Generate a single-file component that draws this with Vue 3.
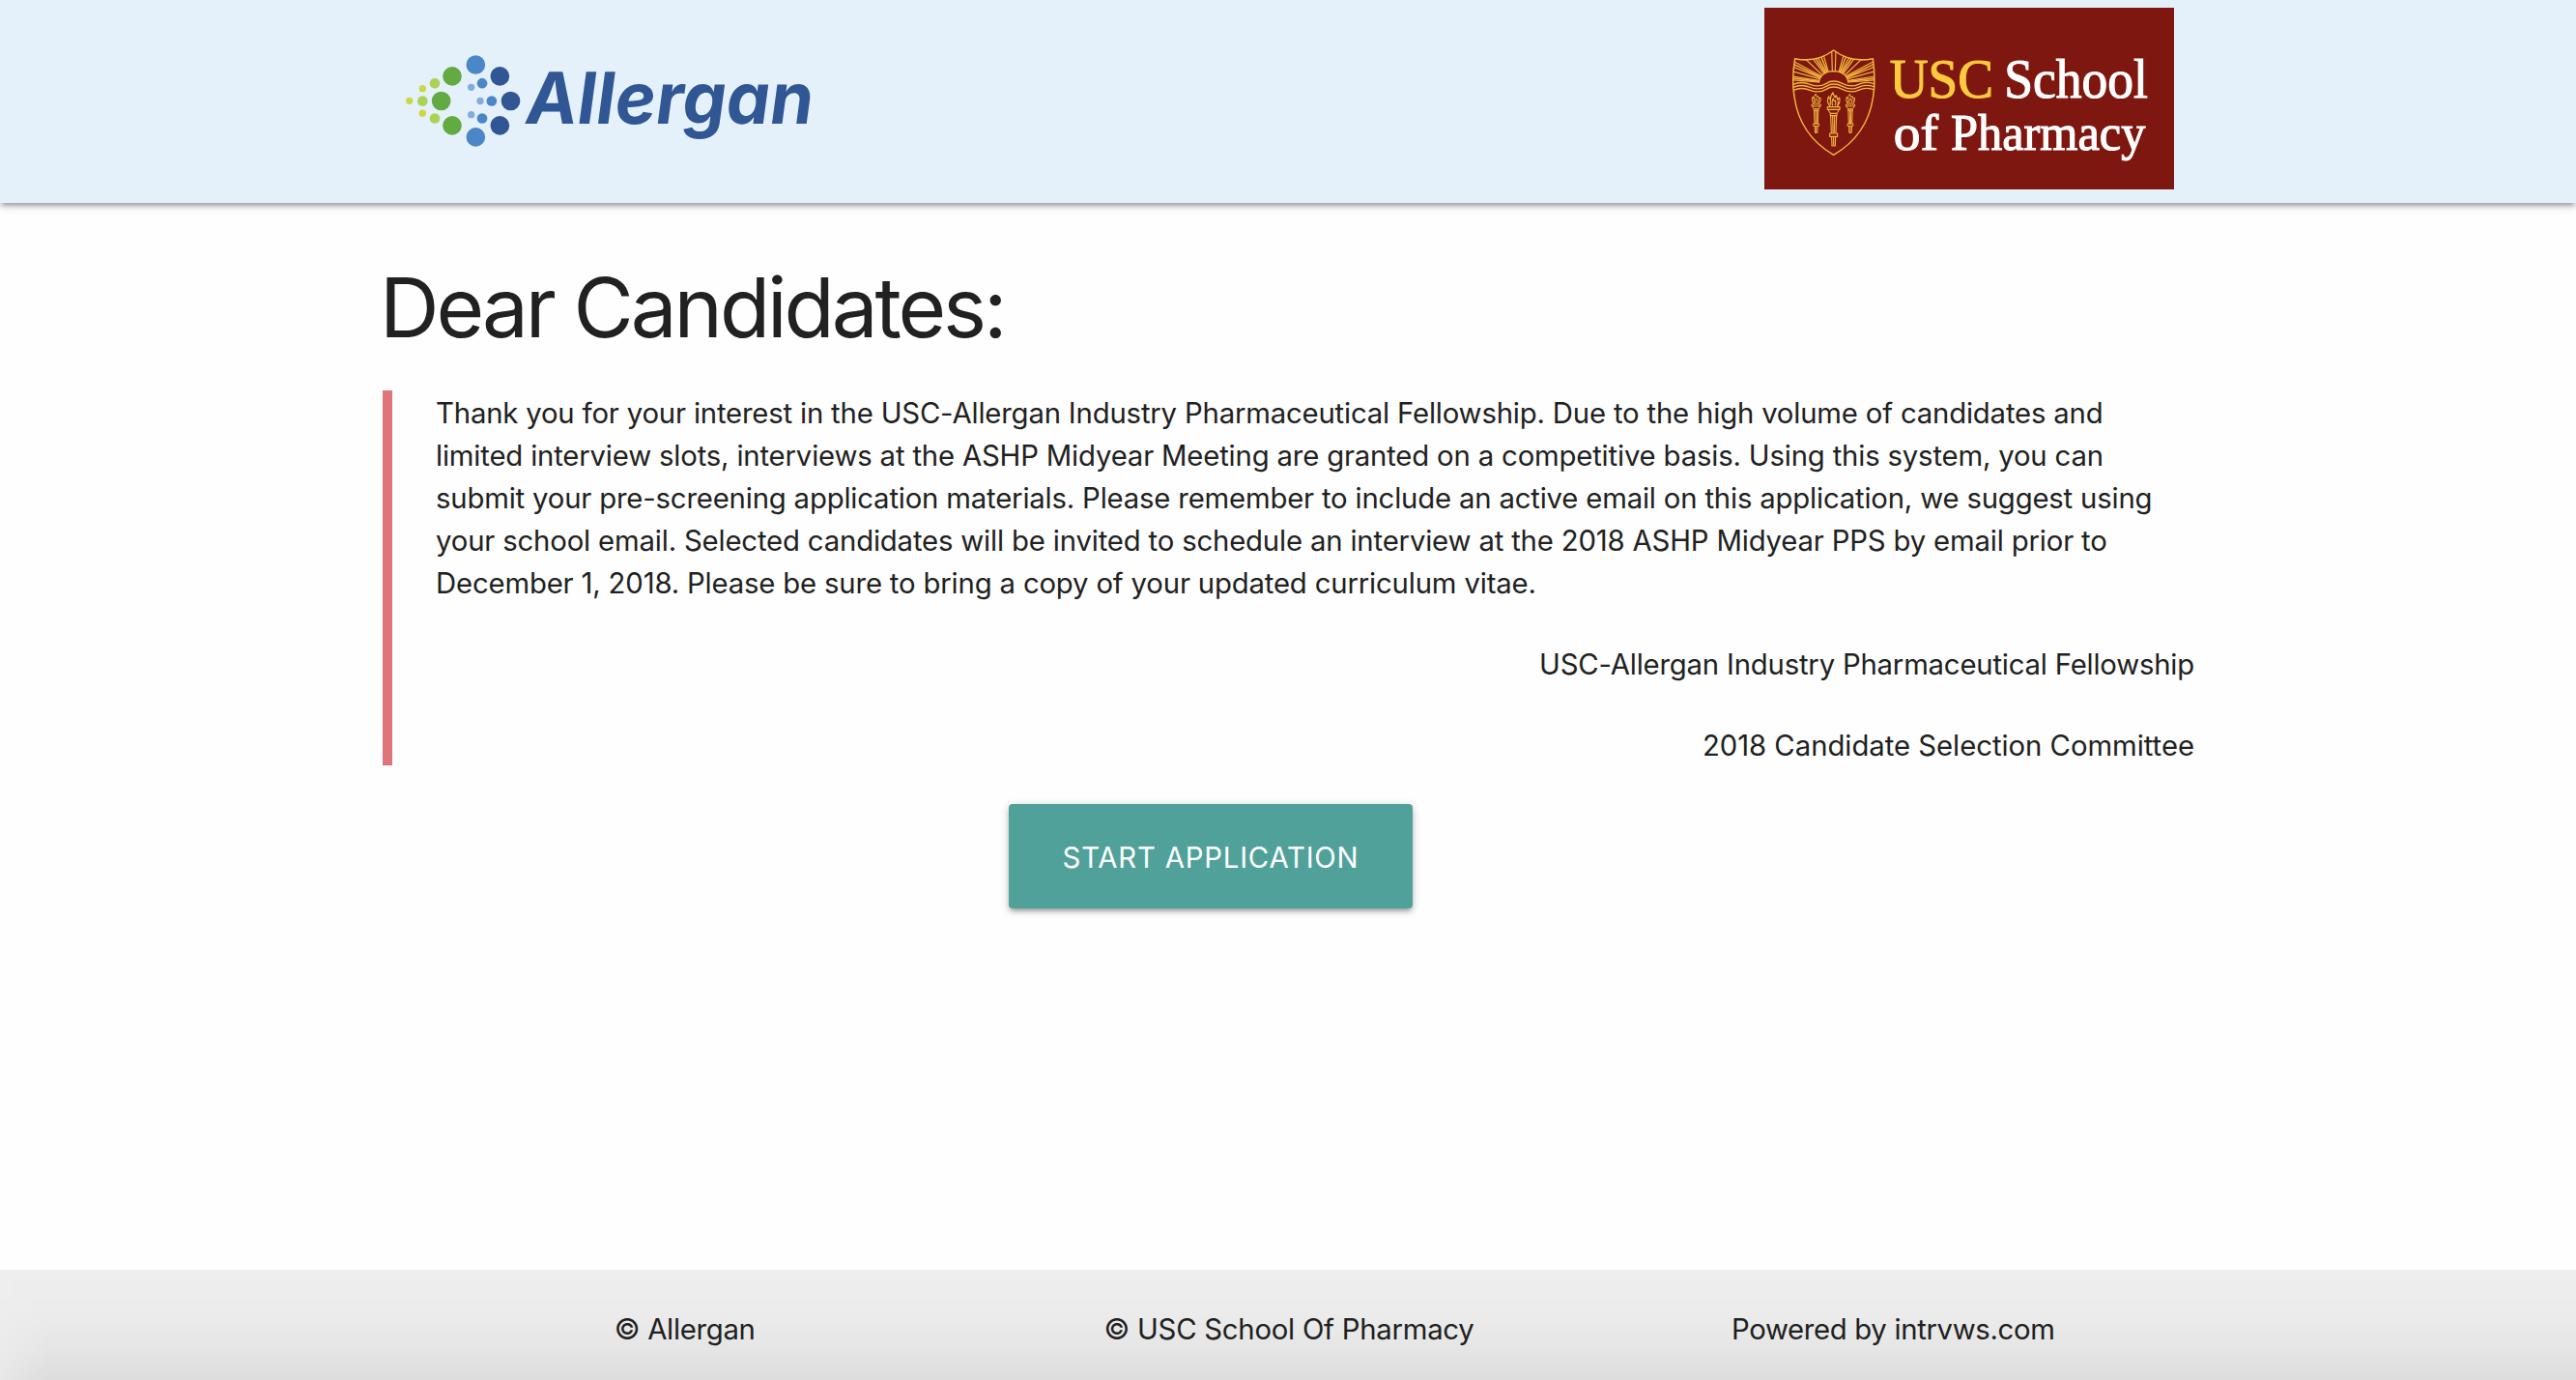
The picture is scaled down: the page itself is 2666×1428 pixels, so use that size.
<script setup>
const letter = [
  { text: 'Thank you for your interest in the USC-Allergan Industry Pharmaceutical Fellowship. Due to the high volume of candidates and', track: -0.175 },
  { text: 'limited interview slots, interviews at the ASHP Midyear Meeting are granted on a competitive basis. Using this system, you can', track: -0.17 },
  { text: 'submit your pre-screening application materials. Please remember to include an active email on this application, we suggest using', track: -0.177 },
  { text: 'your school email. Selected candidates will be invited to schedule an interview at the 2018 ASHP Midyear PPS by email prior to', track: -0.165 },
  { text: 'December 1, 2018. Please be sure to bring a copy of your updated curriculum vitae.', track: -0.165 },
]
const signature = [
  { text: 'USC-Allergan Industry Pharmaceutical Fellowship', track: -0.196 },
  { text: '2018 Candidate Selection Committee', track: -0.03 },
]
const credits = [
  { text: '© Allergan', track: -0.28 },
  { text: '© USC School Of Pharmacy', track: -0.24 },
  { text: 'Powered by intrvws.com', track: -0.33 },
]
const dots = [
  [71, 193, 11, '#cbd745'], [112, 155, 11, '#cbd745'], [112, 231.5, 11, '#cbd745'],
  [112, 193.5, 16, '#add155'], [150, 138.5, 16, '#add155'], [150, 247.5, 16, '#add155'],
  [204, 116.5, 29.5, '#63aa43'], [170, 193.5, 29.5, '#63aa43'], [204, 269.5, 29.5, '#63aa43'],
  [277, 81, 29.5, '#4b87c7'], [277, 305.5, 29.5, '#4b87c7'],
  [297, 138.5, 16, '#4b87c7'], [326.5, 193.5, 16, '#4b87c7'], [297, 247.5, 16, '#4b87c7'],
  [263, 151, 11, '#85abdf'], [291, 193.5, 11, '#85abdf'], [263, 236, 11, '#85abdf'],
  [352, 116.5, 29.5, '#315694'], [385.5, 193.5, 29.5, '#315694'], [352, 269.5, 29.5, '#315694'],
]
</script>

<template>
  <div class="page">
    <header class="header">
      <svg class="allergan" viewBox="0 0 1380 390" role="img" aria-label="Allergan">
        <circle v-for="(d, i) in dots" :key="i" :cx="d[0]" :cy="d[1]" :r="d[2]" :fill="d[3]" />
        <text x="0" y="0" transform="translate(434 264) skewX(1.5)" textLength="893" lengthAdjust="spacingAndGlyphs" class="brand">Allergan</text>
      </svg>
      <svg class="usc" viewBox="48 24 1272 564" role="img" aria-label="USC School of Pharmacy">
        <rect x="48" y="24" width="1272" height="564" fill="#7e170f" />
        <defs>
          <clipPath id="sky">
            <path d="M143 182Q210 196 263 156Q316 196 385 182Q389 220 389 258Q360 250 325 262Q263 240 200 262Q165 250 138 258Q138 220 143 182Z" />
          </clipPath>
          <g id="torch">
            <path d="M-11 -2Q-24 -18 -15 -33Q-13 -24 -10 -22Q-10 -36 -2 -45Q-1 -35 5 -29L7 -36Q12 -30 12 -22L18 -29Q22 -14 11 -2M-9 -6Q-13 -16 -8 -20M-3 -4Q-7 -16 -1 -26Q2 -14 6 -20Q8 -10 4 -4M12 -6Q15 -12 14 -18" />
            <path d="M-19 0H19V8H-19ZM-16 8Q-14 18 -9 20H9Q14 18 16 8M-10 20H10V27H-10ZM-9 27L-7 82H7L9 27M-3 28L-2 80M3 28L2 80M-12 82H12V92H-12ZM-6 92L-5 121H5L6 92M0 94V119" />
          </g>
        </defs>
        <g fill="none" stroke="#f3b63f" stroke-linejoin="round">
          <path stroke-width="4.5" d="M143 182Q210 196 263 156Q316 196 385 182Q394 250 386 300Q368 420 263 481Q158 420 141 300Q132 250 143 182Z" />
          <g clip-path="url(#sky)" stroke-width="3.6">
            <path d="M259 222L257 150M268 222L270 150M247 224L230 165M241 226L214 178M279 224L296 165M285 226L312 178M234 230L196 178M229 234L170 178M292 230L330 178M297 234L356 178M226 237L130 186M222 241L130 205M300 237L396 186M304 241L396 205M220 245L130 220M217 250L130 236M306 245L396 220M309 250L396 236M215 255L130 248M311 255L396 248" />
            <path stroke-width="4.5" d="M238 228L205 178M288 228L321 178M224 240L130 195M302 240L396 195M244 225L222 170M282 225L304 170M216 253L130 242M310 253L396 242" />
            <path d="M217 262Q218 223 263 221Q308 223 309 262Z" fill="#7e170f" stroke-width="4" />
          </g>
          <g stroke-width="4">
            <path d="M138 262Q162 251 190 262T240 259T290 259T340 262T388 260" />
            <path d="M138 271Q162 260 190 271T240 268T290 268T340 271T388 269" />
            <path d="M139 280Q162 269 190 280T240 277T290 277T340 280T387 278" />
          </g>
          <use href="#torch" transform="translate(263 332)" stroke-width="3.4" />
          <use href="#torch" transform="translate(209 324) scale(.73)" stroke-width="4" />
          <use href="#torch" transform="translate(315 324) scale(.73)" stroke-width="4" />
        </g>
        <g class="school">
          <text x="437" y="303" textLength="322" lengthAdjust="spacingAndGlyphs" fill="#fbc93d" stroke="#fbc93d">USC</text>
          <text x="793" y="303" textLength="446" lengthAdjust="spacingAndGlyphs">School</text>
          <g class="second">
            <text x="449" y="466" textLength="139" lengthAdjust="spacingAndGlyphs">of</text>
            <text x="627" y="466" textLength="604" lengthAdjust="spacingAndGlyphs">Pharmacy</text>
          </g>
        </g>
      </svg>
    </header>

    <main class="content">
      <h2>Dear Candidates:</h2>
      <blockquote>
        <p class="letter">
          <span v-for="line in letter" :key="line.text" :style="{ letterSpacing: line.track + 'px' }">{{ line.text }}</span>
        </p>
        <p v-for="line in signature" :key="line.text" class="sign" :style="{ letterSpacing: line.track + 'px' }">{{ line.text }}</p>
      </blockquote>
      <button type="button">START APPLICATION</button>
    </main>

    <footer class="footer">
      <div class="credits">
        <span v-for="c in credits" :key="c.text" :style="{ letterSpacing: c.track + 'px' }">{{ c.text }}</span>
      </div>
    </footer>
  </div>
</template>

<style>
body {
  margin: 0;
  background: #fefefe;
}
</style>

<style scoped>
.page {
  display: flex;
  flex-direction: column;
  height: 1428px;
  overflow: hidden;
  background: #fefefe;
  color: #212121;
  font: 29.3px/44px Inter, "Liberation Sans", sans-serif;
}
.header {
  box-sizing: border-box;
  display: flex;
  justify-content: space-between;
  flex: none;
  height: 210px;
  padding: 8px 416px 0 400px;
  background: #e4f1fb;
  box-shadow: 0 4px 4px 0 rgba(0, 0, 0, 0.14), 0 6px 2px -4px rgba(0, 0, 0, 0.12), 0 2px 10px 0 rgba(0, 0, 0, 0.2);
}
.allergan {
  width: 460px;
  height: 130px;
  margin-top: 32px;
}
.brand {
  font: italic 740 222px Inter, sans-serif;
  fill: #315694;
}
.usc {
  width: 424px;
  height: 188px;
}
.school {
  font: 172px "Liberation Serif", serif;
  fill: #fff;
  stroke: #fff;
  stroke-width: 3.5px;
}
.second {
  font-size: 161px;
}
.content {
  flex: 1;
  width: 1875px;
  margin-left: 396px;
}
h2 {
  height: 96px;
  margin: 60px 0 38px -3px;
  font-size: 85.3px;
  font-weight: 400;
  line-height: 96px;
  letter-spacing: -3.1px;
  white-space: nowrap;
}
blockquote {
  box-sizing: border-box;
  height: 388px;
  margin: 0;
  padding: 2px 0 0 45px;
  border-left: 10px solid #df7479;
}
.letter {
  display: flex;
  flex-direction: column;
  margin: 0;
}
.letter span,
.credits span {
  white-space: nowrap;
}
.sign {
  margin: 40px 0 0;
  text-align: right;
}
button {
  display: block;
  width: 418px;
  height: 108px;
  margin: 40px 0 0 648px;
  padding: 3px 0 0;
  border: 0;
  border-radius: 4px;
  background: #50a19a;
  box-shadow: 0 4px 4px 0 rgba(0, 0, 0, 0.14), 0 6px 2px -4px rgba(0, 0, 0, 0.12), 0 2px 10px 0 rgba(0, 0, 0, 0.2);
  color: #fff;
  font: 29.3px/44px Inter, "Liberation Sans", sans-serif;
  letter-spacing: 0.8px;
}
.footer {
  position: relative;
  flex: none;
  height: 114px;
  background: #eee;
}
.footer::after {
  content: "";
  position: absolute;
  inset: 0;
  background: linear-gradient(to top, rgba(0, 0, 0, 0.07), rgba(0, 0, 0, 0.03) 30%, rgba(0, 0, 0, 0.008) 65%, transparent);
  mask-image: linear-gradient(to right, rgba(0, 0, 0, 0.35), #000 50px);
}
.credits {
  display: grid;
  grid-template-columns: repeat(3, 1fr);
  width: 1876px;
  margin-left: 396px;
  padding-top: 40px;
  text-align: center;
}
</style>
